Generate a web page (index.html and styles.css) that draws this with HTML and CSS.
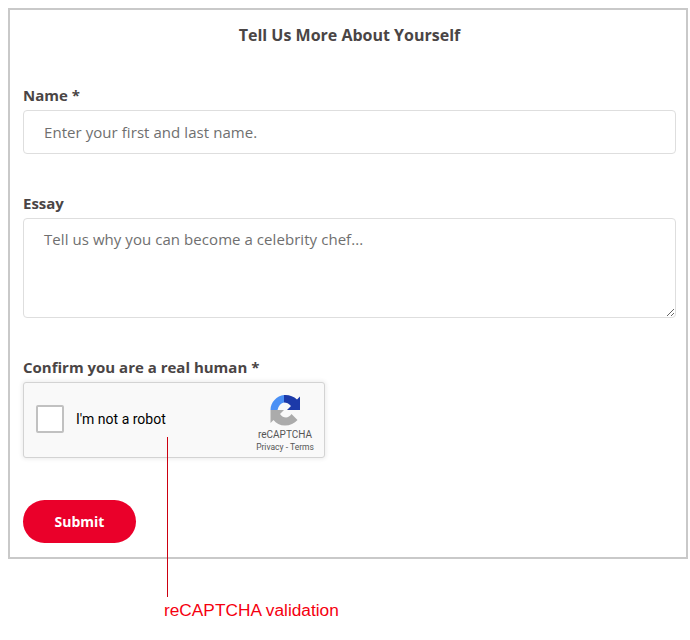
FILE: index.html
```html
<!DOCTYPE html>
<html>
<head>
<meta charset="utf-8" />
<title>Tell Us More About Yourself</title>
<link rel="stylesheet" href="styles.css">
</head>
<body>
<div class="page">
	<form class="card">
		<h2 class="title">Tell Us More About Yourself</h2>

		<div class="field field-name">
			<label class="label">Name *</label>
			<input class="text-input" type="text" placeholder="Enter your first and last name." />
		</div>

		<div class="field field-essay">
			<label class="label">Essay</label>
			<textarea class="text-area" placeholder="Tell us why you can become a celebrity chef..."></textarea>
		</div>

		<div class="field field-captcha">
			<label class="label">Confirm you are a real human *</label>
			<div class="captcha">
				<span class="captcha-check"></span>
				<span class="captcha-text">I'm not a robot</span>
				<div class="captcha-brand">
					<svg class="captcha-logo" viewBox="0 0 64 64" width="32" height="32">
						<path fill="#ababab" d="M3 32H30L22 40C25 45 30 47 34 47C38 47 42 44 45 40L57 52C51 59 42 63 32 63C22 63 14 59 9 52L3 58Z"/>
						<path fill="#4a90f5" d="M30 2V17C24 18 19 23 17 32H3C3 24 6 17 11 12C16 6 23 3 30 2Z"/>
						<path fill="#1c3aa9" d="M30 2C39 1 49 4 56 11L62 5V32H36L44 24C40 19 35 17 30 17Z"/>
					</svg>
					<p class="captcha-name">reCAPTCHA</p>
					<p class="captcha-links">Privacy - Terms</p>
				</div>
			</div>
		</div>

		<button class="submit" type="button">Submit</button>
	</form>

	<span class="note-line"></span>
	<p class="note">reCAPTCHA validation</p>
</div>
</body>
</html>
```

FILE: styles.css
```css
*{ margin:0; padding:0; box-sizing:border-box;}
body{ margin:8px 2px 0 8px; background:#fff; font-family:"Open Sans","Noto Sans",sans-serif; color:#4a4545;}

.page{ position:relative;}

.card{ height:551px; border:2px solid #c9c9c9; padding:0 10px 0 13px;}
.title{ font-size:16px; line-height:22px; font-weight:700; text-align:center; padding-top:14px; height:36px; box-sizing:content-box;}

.label{ display:block; font-size:15px; line-height:20px; font-weight:700; margin-bottom:5px;}
.field-name{ margin-top:25px;}
.field-essay{ margin-top:39px;}
.field-captcha{ margin-top:39px;}

.text-input,
.text-area{ display:block; width:100%; border:1px solid #dedede; border-radius:4px; background:#fff; font-family:"Open Sans","Noto Sans",sans-serif; font-size:15px; letter-spacing:0.06px; color:#666; outline:none;}
.text-input::placeholder,
.text-area::placeholder{ color:#6f6f6f; opacity:1;}
.text-input{ height:44px; padding:0 20px;}
.text-area{ height:100px; padding:9px 20px; line-height:22px;}

.captcha{ display:flex; align-items:flex-start; width:302px; height:76px; border:1px solid #d3d3d3; border-radius:3px; background:#f9f9f9; box-shadow:0 0 4px 1px rgba(0,0,0,0.08); font-family:Roboto,"Liberation Sans",sans-serif; color:#000;}
.captcha-check{ width:28px; height:28px; margin:22px 12px 0 12px; border:2px solid #c1c1c1; border-radius:2px; background:#fff;}
.captcha-text{ margin-top:27px; font-size:14px; line-height:18px;}
.captcha-brand{ margin-left:auto; width:78px; padding-top:11px; text-align:center; color:#555;}
.captcha-logo{ display:block; margin:0 auto;}
.captcha-name{ font-size:10px; line-height:12px; margin-top:3px;}
.captcha-links{ font-size:8.5px; line-height:10px; margin-top:1px;}

.submit{ display:block; width:113px; height:43px; margin-top:42px; border:0; border-radius:22px; background:#ea002a; color:#fff; font-family:"Open Sans","Noto Sans",sans-serif; font-size:14px; font-weight:700;}

.note-line{ position:absolute; left:159px; top:429px; width:1px; height:160px; background:#cc0010;}
.note{ margin:41px 0 0 156px; font-family:"Liberation Sans",Arial,sans-serif; font-size:17.3px; line-height:20px; color:#f5000f;}
```
